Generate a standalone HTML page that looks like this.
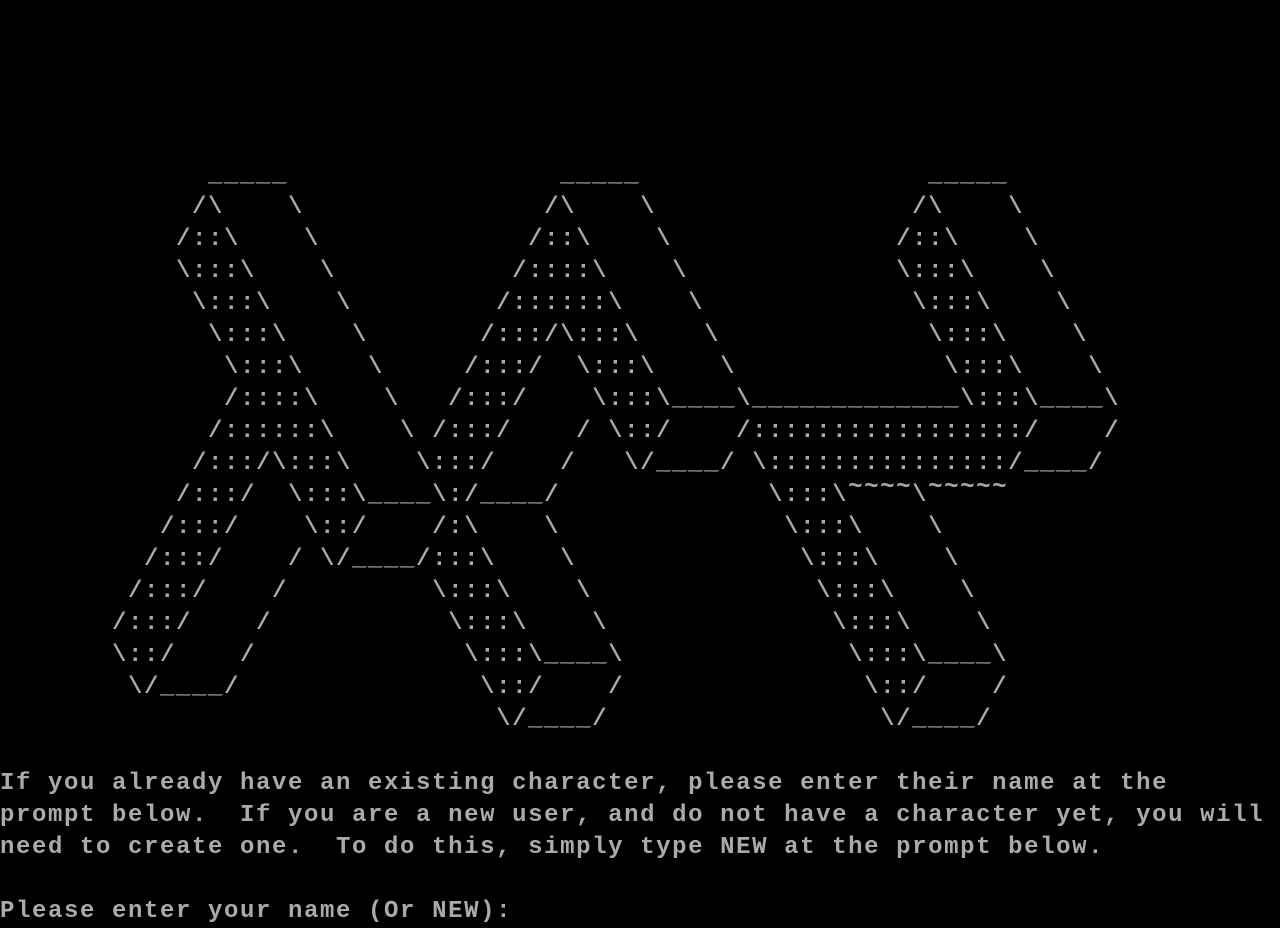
<!DOCTYPE html>
<html><head><meta charset="utf-8"><style>
html,body{margin:0;padding:0;background:#000;width:1280px;height:928px;overflow:hidden}
pre{margin:0;padding:0;font-family:"Liberation Mono",monospace;font-size:24px;letter-spacing:1.6px;line-height:32px;color:#aaaaaa;white-space:pre;font-weight:bold}
.t{position:relative;top:-8px}
</style></head><body><pre>





             _____                 _____                  _____
            /\    \               /\    \                /\    \
           /::\    \             /::\    \              /::\    \
           \:::\    \           /::::\    \             \:::\    \
            \:::\    \         /::::::\    \             \:::\    \
             \:::\    \       /:::/\:::\    \             \:::\    \
              \:::\    \     /:::/  \:::\    \             \:::\    \
              /::::\    \   /:::/    \:::\____\_____________\:::\____\
             /::::::\    \ /:::/    / \::/    /:::::::::::::::::/    /
            /:::/\:::\    \:::/    /   \/____/ \:::::::::::::::/____/
           /:::/  \:::\____\:/____/             \:::\<span class="t">~~~~</span>\<span class="t">~~~~~</span>
          /:::/    \::/    /:\    \              \:::\    \
         /:::/    / \/____/:::\    \              \:::\    \
        /:::/    /         \:::\    \              \:::\    \
       /:::/    /           \:::\    \              \:::\    \
       \::/    /             \:::\____\              \:::\____\
        \/____/               \::/    /               \::/    /
                               \/____/                 \/____/

If you already have an existing character, please enter their name at the
prompt below.  If you are a new user, and do not have a character yet, you will
need to create one.  To do this, simply type NEW at the prompt below.

Please enter your name (Or NEW):</pre></body></html>
